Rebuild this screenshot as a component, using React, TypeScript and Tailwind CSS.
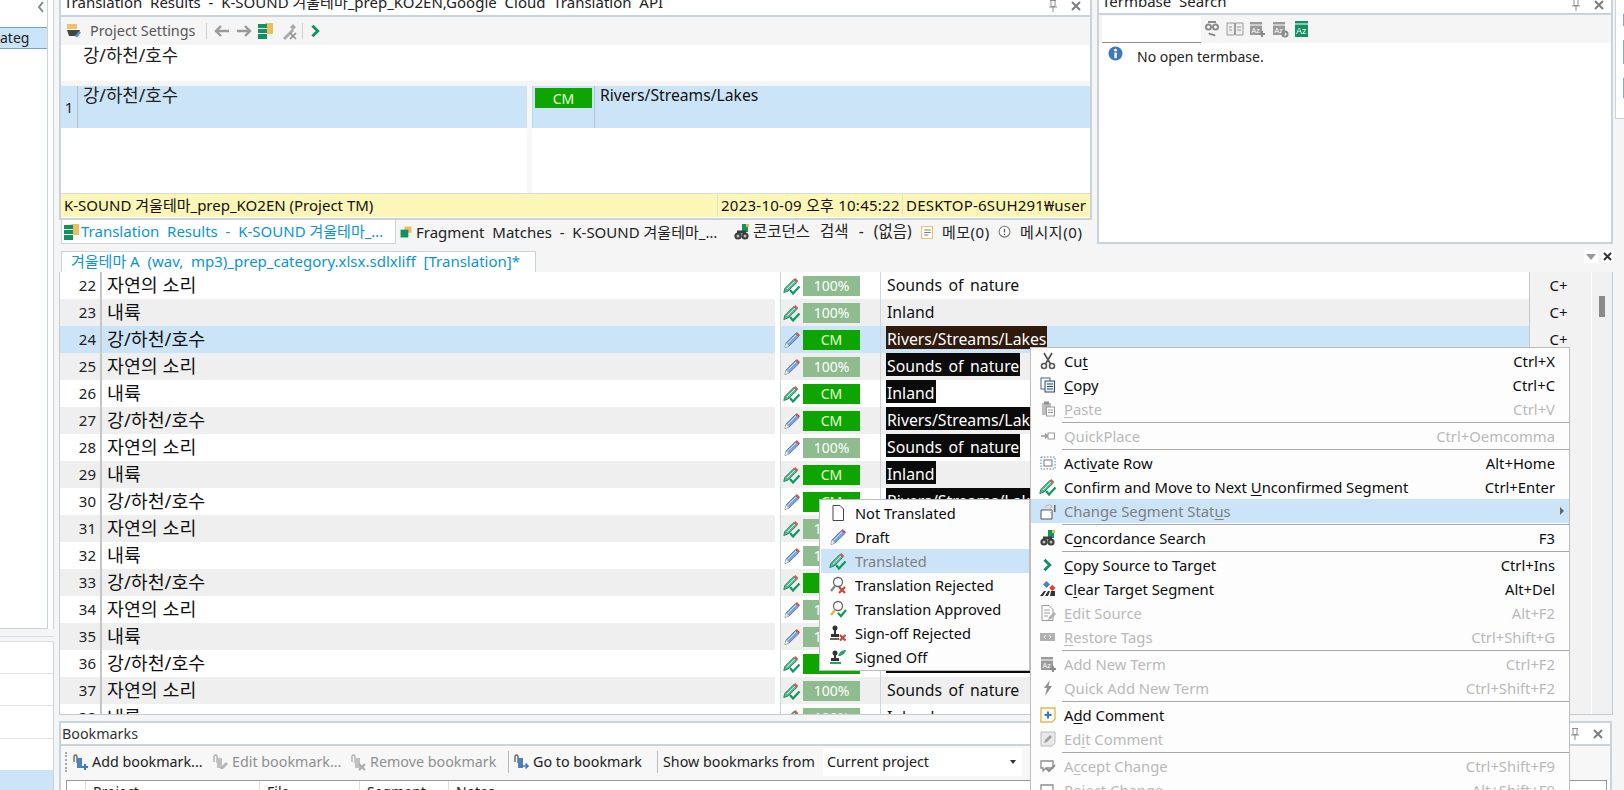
import { ReactNode } from "react";

const KO = `font-['Noto_Sans','Noto_Sans_CJK_KR',sans-serif]`;

function Ic({ s = 18, children, className = "" }: { s?: number; children: ReactNode; className?: string }) {
    return (
        <svg width={s} height={s} viewBox="0 0 18 18" className={`shrink-0 ${className}`}>
            {children}
        </svg>
    );
}

// Status pencils
const DraftIcon = () => (
    <Ic>
        <path d="M2 16.5l1-4.5L12.5 2.5l3.2 3.2L6 15z" fill="#7ea3da" stroke="#3f6fb5" strokeWidth="0.8" />
        <path d="M4.5 12.5L13 4" stroke="#dbe7f7" strokeWidth="0.9" />
        <path d="M12.5 2.5l1.4-1.4 3.2 3.2-1.4 1.4z" fill="#d9534f" />
        <path d="M2 16.5l1-4.5 3 3z" fill="#f1e8d2" />
    </Ic>
);
const TranslatedIcon = () => (
    <Ic>
        <path d="M0.8 15.5l1-4L10.8 2.5l3 3L5 14z" fill="#5cb894" stroke="#1f8a5e" strokeWidth="1" />
        <path d="M4 12L12 4" stroke="#d8f0e4" strokeWidth="0.9" />
        <path d="M10.8 2.5l1.5-1.5 3 3-1.5 1.5z" fill="#d9534f" />
        <path d="M7 13l3 3.5 6.5-7" fill="none" stroke="#11975f" strokeWidth="2.2" />
    </Ic>
);

const GreenChevron = () => (
    <Ic s={16}>
        <path d="M5 3l6 6-6 6" fill="none" stroke="#12925f" strokeWidth="3.2" />
    </Ic>
);
const Binoculars = () => (
    <Ic>
        <rect x="9" y="1" width="6" height="8" fill="#12925f" />
        <rect x="13" y="1" width="3" height="3" fill="#e8b74e" />
        <circle cx="5" cy="13" r="3.6" fill="#3d3d3d" />
        <circle cx="12" cy="13" r="3.6" fill="#3d3d3d" />
        <circle cx="5" cy="13" r="1.5" fill="#bbb" />
        <circle cx="12" cy="13" r="1.5" fill="#bbb" />
        <rect x="4" y="7.5" width="9" height="3" fill="#3d3d3d" />
    </Ic>
);
const SegGrid = ({ c = "#12925f" }: { c?: string }) => (
    <Ic>
        <rect x="8" y="1" width="8" height="11" fill="#eebd5e" />
        <rect x="1" y="2" width="9" height="15" fill={c} />
        <path d="M1 6.5h9M1 11.5h9" stroke="#fff" strokeWidth="1.2" />
    </Ic>
);
const TermBox = ({ mark = "plus" }: { mark?: string }) => (
    <Ic>
        <rect x="2" y="2" width="12" height="13" fill="#9a9a9a" />
        <path d="M2 5h12" stroke="#fff" />
        <text x="3.5" y="13" fontSize="7" fill="#fff" fontFamily="Liberation Sans">Az</text>
        {mark === "plus" ? (
            <path d="M11 14h6M14 11v6" stroke="#8a8a8a" strokeWidth="2" />
        ) : (
            <circle cx="14" cy="14" r="2.6" fill="none" stroke="#8a8a8a" strokeWidth="2" />
        )}
    </Ic>
);
const BookmarkIcon = ({ off, tail }: { off?: boolean; tail: ReactNode }) => (
    <Ic>
        <path d="M3 9V3.5C3 1.5 6 1.5 6 3.5V10" fill="none" stroke={off ? "#b0b0b0" : "#666"} strokeWidth="1.4" />
        <path d="M6 5h5v10H6z" fill={off ? "#c0c0c0" : "#4f7fbd"} />
        {tail}
    </Ic>
);

// Context menu icons
const icons: Record<string, ReactNode> = {
    cut: (
        <Ic>
            <path d="M5 1l6.5 11M13 1L6.5 12" stroke="#555" strokeWidth="1.7" />
            <circle cx="5" cy="14" r="2.5" fill="#fff" stroke="#555" strokeWidth="1.6" />
            <circle cx="13" cy="14" r="2.5" fill="#fff" stroke="#555" strokeWidth="1.6" />
        </Ic>
    ),
    copy: (
        <Ic>
            <rect x="2" y="2" width="9" height="11" fill="#fff" stroke="#44607f" />
            <rect x="6" y="5" width="9.5" height="11" fill="#e8eff7" stroke="#2f4c6b" />
            <path d="M8 8h6M8 10.5h6M8 13h6" stroke="#2f4c6b" />
        </Ic>
    ),
    paste: (
        <Ic>
            <rect x="3" y="3" width="9" height="12" fill="#bdbdbd" />
            <rect x="5" y="1.5" width="5" height="3" fill="#8f8f8f" />
            <rect x="7.5" y="7" width="8" height="9" fill="#fff" stroke="#9a9a9a" />
            <path d="M9 10h5M9 12.5h5" stroke="#9a9a9a" />
        </Ic>
    ),
    quick: (
        <Ic>
            <path d="M2 9h6M6 6.5L8.5 9 6 11.5" fill="none" stroke="#999" strokeWidth="1.6" />
            <rect x="9" y="6" width="6.5" height="6" fill="#fff" stroke="#999" />
        </Ic>
    ),
    activate: (
        <Ic>
            <rect x="2" y="3" width="14" height="12" fill="none" stroke="#4c7db8" strokeDasharray="1.5 1.5" />
            <rect x="5" y="6" width="8" height="6" fill="#fff" stroke="#777" />
        </Ic>
    ),
    confirm: <TranslatedIcon />,
    status: (
        <Ic>
            <path d="M2 8h11v9H2z" fill="#fff" stroke="#555" />
            <path d="M6 6c1-3 5-4 7-2l-2 3c2 1 2 3 0 4" fill="none" stroke="#e2a79b" />
            <rect x="15" y="3" width="1.5" height="7" fill="#666" />
        </Ic>
    ),
    binoc: <Binoculars />,
    chevron: <GreenChevron />,
    clear: (
        <Ic>
            <path d="M1 16l4-5h2l-3 5zM6 16l3-5h2l-2 5zM11 16l1-5h4v5z" fill="#333" />
            <rect x="5" y="2" width="5" height="5" transform="rotate(45 7.5 4.5)" fill="#4a7fc0" />
            <rect x="11" y="5.5" width="4.5" height="4.5" transform="rotate(45 13 8)" fill="#d9453d" />
        </Ic>
    ),
    editsrc: (
        <Ic>
            <path d="M3 1.5h7l4 4v11H3z" fill="#fff" stroke="#9a9a9a" />
            <path d="M5 6h6M5 9h6M5 12h4" stroke="#9a9a9a" />
            <path d="M9 16l1-3 5-5 2 2-5 5z" fill="#b0b0b0" />
        </Ic>
    ),
    restore: (
        <Ic>
            <rect x="1" y="5" width="15" height="8" fill="#b0b0b0" />
            <path d="M7 7l-2 2 2 2M10 7l2 2-2 2" fill="none" stroke="#fff" />
        </Ic>
    ),
    addterm: <TermBox />,
    bolt: (
        <Ic>
            <path d="M11 1L5 9h3l-2 8 7-10H9.5z" fill="#8f8f8f" />
        </Ic>
    ),
    addcomment: (
        <Ic>
            <path d="M2 2h14v11l-3 3H2z" fill="#fff" stroke="#e8b74e" strokeWidth="1.4" />
            <path d="M9 5.5v7M5.5 9h7" stroke="#3f79bd" strokeWidth="2" />
        </Ic>
    ),
    editcomment: (
        <Ic>
            <path d="M2 2h14v11l-3 3H2z" fill="#e8e8e8" stroke="#bbb" />
            <path d="M5 13l1-3 5-5 2 2-5 5z" fill="#a0a0a0" />
        </Ic>
    ),
    accept: (
        <Ic>
            <path d="M2 4h12v7H7l-3 3v-3H2z" fill="#fff" stroke="#8f8f8f" strokeWidth="1.3" />
            <path d="M7 11l3 3 6-6" fill="none" stroke="#8f8f8f" strokeWidth="2" />
        </Ic>
    ),
    reject: (
        <Ic>
            <path d="M2 4h12v7H7l-3 3v-3H2z" fill="#fff" stroke="#8f8f8f" strokeWidth="1.3" />
        </Ic>
    ),
};

type MenuItem = { label: string; keys?: string; icon: string; off?: boolean; hot?: boolean; arrow?: boolean };

const menuGroups: MenuItem[][] = [
    [
        { label: "Cu&t", keys: "Ctrl+X", icon: "cut" },
        { label: "&Copy", keys: "Ctrl+C", icon: "copy" },
        { label: "&Paste", keys: "Ctrl+V", icon: "paste", off: true },
    ],
    [{ label: "QuickPlace", keys: "Ctrl+Oemcomma", icon: "quick", off: true }],
    [
        { label: "Acti&vate Row", keys: "Alt+Home", icon: "activate" },
        { label: "Confirm and Move to Next &Unconfirmed Segment", keys: "Ctrl+Enter", icon: "confirm" },
        { label: "Change Segment Stat&us", icon: "status", hot: true, arrow: true },
    ],
    [{ label: "C&oncordance Search", keys: "F3", icon: "binoc" }],
    [
        { label: "&Copy Source to Target", keys: "Ctrl+Ins", icon: "chevron" },
        { label: "C&lear Target Segment", keys: "Alt+Del", icon: "clear" },
        { label: "&Edit Source", keys: "Alt+F2", icon: "editsrc", off: true },
        { label: "&Restore Tags", keys: "Ctrl+Shift+G", icon: "restore", off: true },
    ],
    [
        { label: "Add New Term", keys: "Ctrl+F2", icon: "addterm", off: true },
        { label: "Quick Add New Term", keys: "Ctrl+Shift+F2", icon: "bolt", off: true },
    ],
    [
        { label: "A&dd Comment", icon: "addcomment" },
        { label: "Ed&it Comment", icon: "editcomment", off: true },
    ],
    [
        { label: "A&ccept Change", keys: "Ctrl+Shift+F9", icon: "accept", off: true },
        { label: "Re&ject Change", keys: "Alt+Shift+F9", icon: "reject", off: true },
    ],
];

// "&" marks the mnemonic letter
function Mnemonic({ text }: { text: string }) {
    const i = text.indexOf("&");
    if (i < 0) return <>{text}</>;
    return (
        <>
            {text.slice(0, i)}
            <span className="underline underline-offset-2">{text[i + 1]}</span>
            {text.slice(i + 2)}
        </>
    );
}

function ContextMenu() {
    return (
        <div className="absolute left-[1030px] top-[347px] z-10 w-[540px] border border-[#bdbdbd] bg-[#fdfdfd] pt-[1px] text-[14.8px] font-['Noto_Sans',sans-serif]">
            {menuGroups.map((group, gi) => (
                <div key={gi}>
                    {gi > 0 && (
                        <div className="flex h-[3px] items-center pl-[31px]">
                            <div className="h-px w-full bg-[#a8a8a8]" />
                        </div>
                    )}
                    {group.map((item) => (
                        <div
                            key={item.label}
                            className={`flex h-[24px] items-center ${item.hot ? "bg-[#cce4f7] text-[#7f7f7f]" : item.off ? "text-[#b9b9b9]" : "text-[#0c0c0c]"}`}
                        >
                            <div className="flex w-[33px] justify-center">{icons[item.icon]}</div>
                            <span className="flex-1">
                                <Mnemonic text={item.label} />
                            </span>
                            {item.keys && <span className="pr-[14px]">{item.keys}</span>}
                            {item.arrow && <span className="mr-[5px] h-0 w-0 border-y-[4px] border-l-[4px] border-y-transparent border-l-[#666]" />}
                        </div>
                    ))}
                </div>
            ))}
        </div>
    );
}

const subItems: { label: string; icon: ReactNode; hot?: boolean }[] = [
    {
        label: "Not Translated",
        icon: (
            <Ic>
                <path d="M4 1.5h7l3.5 3.5v11.5H4z" fill="#fff" stroke="#444" />
            </Ic>
        ),
    },
    { label: "Draft", icon: <DraftIcon /> },
    { label: "Translated", icon: <TranslatedIcon />, hot: true },
    {
        label: "Translation Rejected",
        icon: (
            <Ic>
                <circle cx="9" cy="6" r="4.5" fill="#fff" stroke="#666" strokeWidth="1.3" />
                <path d="M6 10l-4 5" stroke="#888" strokeWidth="2.4" />
                <path d="M10 11l6 6M16 11l-6 6" stroke="#c8443c" strokeWidth="2.2" />
            </Ic>
        ),
    },
    {
        label: "Translation Approved",
        icon: (
            <Ic>
                <circle cx="9" cy="6" r="4.5" fill="#fff" stroke="#666" strokeWidth="1.3" />
                <path d="M6 10l-4 5" stroke="#e3b341" strokeWidth="2.4" />
                <path d="M9 13l3 3 5-6" fill="none" stroke="#11975f" strokeWidth="2.2" />
            </Ic>
        ),
    },
    {
        label: "Sign-off Rejected",
        icon: (
            <Ic>
                <circle cx="6" cy="4" r="2.5" fill="#333" />
                <path d="M5 6h2v4h3v3H2v-3h3z" fill="#333" />
                <path d="M1 15h9" stroke="#333" strokeWidth="1.5" />
                <path d="M11 11l5.5 5.5M16.5 11L11 16.5" stroke="#c8443c" strokeWidth="2.2" />
            </Ic>
        ),
    },
    {
        label: "Signed Off",
        icon: (
            <Ic>
                <circle cx="6" cy="5" r="2.5" fill="#333" />
                <path d="M5 7h2v3h3v3H2v-3h3z" fill="#333" />
                <path d="M1 15h11" stroke="#11975f" strokeWidth="1.8" />
                <path d="M9 8c1-4 4-6 8-6-1 4-4 6-8 6z" fill="#2fa070" />
            </Ic>
        ),
    },
];

function SubMenu() {
    return (
        <div className="absolute left-[819px] top-[499px] z-20 w-[211px] border border-[#bdbdbd] bg-[#fdfdfd] py-[1px] pl-[1px] text-[14.6px] font-['Noto_Sans',sans-serif]">
            {subItems.map((item) => (
                <div
                    key={item.label}
                    className={`flex h-[24px] items-center ${item.hot ? "bg-[#cce4f7] text-[#7f7f7f]" : "text-[#0c0c0c]"}`}
                >
                    <div className="flex w-[34px] justify-center">{item.icon}</div>
                    <span className="pt-[2px]">{item.label}</span>
                </div>
            ))}
        </div>
    );
}

const SRC = ["자연의 소리", "내륙", "강/하천/호수"];
const TGT = ["Sounds of nature", "Inland", "Rivers/Streams/Lakes"];

type Seg = { n: number; t: boolean; cm: boolean };
const segs: Seg[] = [
    { n: 22, t: true, cm: false },
    { n: 23, t: true, cm: false },
    { n: 24, t: false, cm: true },
    { n: 25, t: false, cm: false },
    { n: 26, t: true, cm: true },
    { n: 27, t: false, cm: true },
    { n: 28, t: false, cm: false },
    { n: 29, t: true, cm: true },
    { n: 30, t: false, cm: true },
    { n: 31, t: true, cm: false },
    { n: 32, t: false, cm: false },
    { n: 33, t: true, cm: true },
    { n: 34, t: false, cm: false },
    { n: 35, t: false, cm: false },
    { n: 36, t: true, cm: true },
    { n: 37, t: true, cm: false },
    { n: 38, t: true, cm: false },
];

function SegmentRow({ seg, index }: { seg: Seg; index: number }) {
    const selected = seg.n === 24;
    const bg = selected ? "bg-[#cce4f7]" : index % 2 === 1 ? "bg-[#efefef]" : "bg-white";
    const marked = seg.n >= 24 && seg.n <= 36;
    return (
        <div className="flex h-[27px] shrink-0">
            <div className={`flex w-[715px] ${bg}`}>
                <div className="flex w-[42px] items-center justify-end border-r-2 border-[#c6c6c6] pr-[4px] text-[15px] text-[#222]">{seg.n}</div>
                <div className={`pl-[5px] text-[18.4px] leading-[26px] text-[#111] ${KO}`}>{SRC[index % 3]}</div>
            </div>
            <div className="w-[5px] bg-white" />
            <div className="w-px bg-[#cfd5da]" />
            <div className={`flex w-[99px] items-center pl-[1px] ${bg}`}>
                <div className="flex w-[20px] justify-center">{seg.t ? <TranslatedIcon /> : <DraftIcon />}</div>
                <div className={`ml-[1px] flex h-[20px] w-[57px] items-center justify-center text-[14px] ${seg.cm ? "bg-[#0ea500] text-[#eaffd8]" : "bg-[#8fbc8f] text-white"}`}>
                    {seg.cm ? "CM" : "100%"}
                </div>
            </div>
            <div className="w-px bg-[#cfd5da]" />
            <div className={`w-[648px] pl-[5px] ${bg}`}>
                <span className={`inline-block h-[23px] px-[1px] text-[15.8px] leading-[26px] [word-spacing:2.4px] ${selected ? "bg-[#2f1a0b] text-white" : marked ? "bg-[#0a0a0a] text-white" : "text-[#111]"}`}>
                    {TGT[index % 3]}
                </span>
            </div>
            <div className="w-px bg-[#c6c6c6]" />
            <div className="flex flex-1 items-center justify-center bg-[#f2f2f2] pr-[4px] text-[15px] text-[#111]">C+</div>
        </div>
    );
}

function PinClose() {
    return (
        <div className="flex items-center gap-[13px] text-[#8d8d8d]">
            <svg width="10" height="12" viewBox="0 0 10 12">
                <path d="M2 0.5h6M3 0.5v6h4v-6M1 7h8M5 7v5" fill="none" stroke="#8d8d8d" />
            </svg>
            <svg width="10" height="10" viewBox="0 0 10 10">
                <path d="M1 1l8 8M9 1l-8 8" stroke="#7d7d7d" strokeWidth="2" />
            </svg>
        </div>
    );
}

function TopPanel() {
    return (
        <div className="w-[1033px]">
            <div className="flex h-[220px] flex-col border-x-2 border-b-2 border-[#c9d3db] bg-white">
                <div className="flex h-[17px] items-end justify-between overflow-hidden border-b-2 border-[#c9d3db] pl-[3px] pr-[9px]">
                    <span className={`whitespace-pre text-[15px] leading-[26px] text-[#222] ${KO}`}>
                        {"Translation  Results  -  K-SOUND 겨울테마_prep_KO2EN,Google  Cloud  Translation  API"}
                    </span>
                    <div className="-translate-y-[3px]">
                        <PinClose />
                    </div>
                </div>
                <div className="flex h-[28px] items-center bg-[#f5f5f5] pl-[3px] text-[14.4px] text-[#555]">
                    <Ic>
                        <path d="M3 8h13l-2 6H5z" fill="#444" />
                        <path d="M3 2h10v5H3z" fill="#f0c26a" />
                        <path d="M11 14l4-5 2 1.5-4 5z" fill="#5f8fce" />
                    </Ic>
                    <span className="ml-[8px]">Project Settings</span>
                    <div className="ml-[10px] h-[16px] w-px bg-[#cfcfcf]" />
                    <svg width="16" height="12" viewBox="0 0 16 12" className="ml-[7px]">
                        <path d="M7 1L2 6l5 5M2 6h13" fill="none" stroke="#9a9a9a" strokeWidth="2.4" />
                    </svg>
                    <svg width="16" height="12" viewBox="0 0 16 12" className="ml-[6px]">
                        <path d="M9 1l5 5-5 5M14 6H1" fill="none" stroke="#9a9a9a" strokeWidth="2.4" />
                    </svg>
                    <div className="ml-[5px]">
                        <SegGrid />
                    </div>
                    <div className="ml-[5px]">
                        <Ic>
                            <path d="M3 16l9-9 2 2-9 9zM13 2l-3 3 3 3 3-3" fill="#aaa" />
                            <path d="M10 11l6 6M16 11l-6 6" stroke="#8d8d8d" strokeWidth="1.6" />
                        </Ic>
                    </div>
                    <div className="ml-[4px] h-[16px] w-px bg-[#cfcfcf]" />
                    <div className="ml-[5px]">
                        <GreenChevron />
                    </div>
                </div>
                <div className={`h-[36px] pl-[22px] text-[17.8px] leading-[20px] text-[#222] ${KO}`}>강/하천/호수</div>
                <div className="h-[5px] bg-[#f5f5f5]" />
                <div className="flex h-[42px]">
                    <div className="flex w-[466px] bg-[#cce4f7]">
                        <div className="flex w-[17px] items-center justify-center border-r border-[#b5bfc7] text-[15px] text-[#222]">1</div>
                        <div className={`pl-[5px] text-[17.8px] leading-[19px] text-[#222] ${KO}`}>강/하천/호수</div>
                    </div>
                    <div className="w-[5px] bg-[#f7f7f7]" />
                    <div className="flex flex-1 border-l border-[#c5d3df] bg-[#cce4f7]">
                        <div className="ml-[2px] mt-[2px] flex h-[20px] w-[57px] items-center justify-center bg-[#0ea500] text-[14px] text-[#eaffd8]">CM</div>
                        <div className="ml-[2px] border-l border-[#b5c7d6] pl-[5px] text-[15.7px] leading-[19px] text-[#111]">Rivers/Streams/Lakes</div>
                    </div>
                </div>
                <div className="flex h-[65px]">
                    <div className="w-[466px]" />
                    <div className="w-[5px] bg-[#f7f7f7]" />
                </div>
                <div className={`flex h-[24px] items-center border-t border-[#d5dde3] bg-[#fcf6b7] text-[15px] text-[#111] ${KO}`}>
                    <span className="w-[656px] pl-[3px]">K-SOUND 겨울테마_prep_KO2EN (Project TM)</span>
                    <span className="w-[185px] whitespace-nowrap border-l border-[#dfe3d8] pl-[3px] leading-[23px] tracking-[0.25px]">2023-10-09 오후 10:45:22</span>
                    <span className="flex-1 whitespace-nowrap border-l border-[#dfe3d8] pl-[3px] leading-[23px] tracking-[0.2px]">DESKTOP-6SUH291₩user</span>
                </div>
            </div>
            <div className={`flex h-[24px] items-center whitespace-pre text-[15px] text-[#222] ${KO}`}>
                <div className="ml-[2px] flex h-full w-[335px] shrink-0 items-center overflow-hidden border-x border-b border-[#c9d3db] bg-white text-[#0a95d6]">
                    <div className="ml-[1px] shrink-0">
                        <SegGrid />
                    </div>
                    <span>{"Translation  Results  -  K-SOUND 겨울테마_…"}</span>
                </div>
                <div className="ml-[3px] flex w-[334px] shrink-0 items-center overflow-hidden">
                    <Ic s={14}>
                        <rect x="7" y="2" width="9" height="8" fill="#eebd5e" />
                        <rect x="2" y="6" width="10" height="10" fill="#12925f" />
                    </Ic>
                    <span className="ml-[3px]">{"Fragment  Matches  -  K-SOUND 겨울테마_…"}</span>
                </div>
                <Binoculars />
                <span className="ml-[2px] w-[157px] shrink-0 text-[15.5px] [word-spacing:1px]">{"콘코던스  검색  -  (없음)"}</span>
                <div className="ml-[10px] shrink-0">
                    <Ic s={15}>
                        <rect x="2" y="2" width="13" height="14" fill="#fff" stroke="#e3b341" />
                        <path d="M5 6h8M5 9h8M5 12h5" stroke="#666" />
                    </Ic>
                </div>
                <span className="ml-[7px] w-[48px] shrink-0 tracking-[0.5px]">메모(0)</span>
                <div className="ml-[7px] shrink-0">
                    <Ic s={15}>
                        <circle cx="9" cy="8" r="6.5" fill="#fff" stroke="#777" strokeWidth="1.3" />
                        <path d="M9 4.5v4.5M9 10.5v1.6" stroke="#555" strokeWidth="1.5" />
                    </Ic>
                </div>
                <span className="ml-[8px] shrink-0 tracking-[0.6px]">메시지(0)</span>
            </div>
        </div>
    );
}

function TermbasePanel() {
    return (
        <div className="ml-[5px] flex h-[244px] w-[516px] flex-col border-x-2 border-b-2 border-[#c9d3db] bg-white">
            <div className="flex h-[13px] items-end justify-between overflow-hidden pl-[3px] pr-[7px]">
                <span className={`whitespace-pre text-[15px] leading-[24px] text-[#222] ${KO}`}>{"Termbase  Search"}</span>
                <div className="-translate-y-[2px]">
                    <PinClose />
                </div>
            </div>
            <div className="flex h-[30px] items-center border-t-2 border-[#c9d3db] bg-[#f5f5f5] pl-[3px]">
                <div className="h-[27px] w-[99px] border-b border-[#8c8c8c] bg-white" />
                <div className="ml-[2px] flex items-center gap-[4.5px]">
                    <Ic>
                        <circle cx="5.5" cy="7" r="3.5" fill="#8a8a8a" />
                        <circle cx="12.5" cy="7" r="3.5" fill="#8a8a8a" />
                        <circle cx="5.5" cy="7" r="1.5" fill="#fff" />
                        <circle cx="12.5" cy="7" r="1.5" fill="#fff" />
                        <path d="M5 2h8M6 13c2 3 4 0 6 3" fill="none" stroke="#8a8a8a" strokeWidth="2" />
                    </Ic>
                    <Ic>
                        <path d="M1 3h7.5v12H1zM9.5 3H17v12H9.5z" fill="#efefef" stroke="#9a9a9a" />
                        <path d="M11 7h4M11 10h4M3 7h3M3 10h3" stroke="#9a9a9a" />
                    </Ic>
                    <TermBox />
                    <TermBox mark="gear" />
                    <Ic>
                        <rect x="2" y="1" width="13" height="16" fill="#12925f" />
                        <path d="M2 4h13" stroke="#fff" />
                        <text x="3" y="13.5" fontSize="9" fill="#fff" fontFamily="Liberation Sans">Az</text>
                    </Ic>
                </div>
            </div>
            <div className="flex pl-[9px] pt-[2px]">
                <svg width="15" height="15" viewBox="0 0 16 16" className="mt-[1px]">
                    <circle cx="8" cy="8" r="7.5" fill="#3f78bb" />
                    <rect x="6.8" y="7" width="2.6" height="6" fill="#fff" />
                    <circle cx="8" cy="4.4" r="1.5" fill="#fff" />
                </svg>
                <span className="ml-[14px] text-[14px] leading-[24px] text-[#222]">No open termbase.</span>
            </div>
        </div>
    );
}

function FarRight() {
    return (
        <div className="ml-[2px] flex h-[119px] flex-1 flex-col gap-[14px] border-b border-l border-[#c9d3db] bg-white pl-[7px] pt-[14px]">
            <div className="h-[12px] border-l-2 border-t border-[#7fa9d6]" />
            <div className="h-[24px] border-l-2 border-t border-[#7fa9d6]" />
            <div className="h-[20px] border-l-2 border-t border-[#7fa9d6]" />
        </div>
    );
}

function DocumentPane() {
    return (
        <div className="flex h-[470px] flex-col">
            <div className="flex h-[21px] items-end justify-between pr-[11px]">
                <div className={`ml-[2px] flex h-[21px] w-[475px] items-center whitespace-pre border-x border-t border-[#c9d3db] bg-white pb-[2px] pl-[9px] text-[15px] text-[#0a95d6] ${KO}`}>
                    {"겨울테마 A  (wav,  mp3)_prep_category.xlsx.sdlxliff  [Translation]*"}
                </div>
                <div className="mb-[9px] flex gap-[3px]">
                    <div className="flex h-[13px] w-[14px] items-center justify-center bg-white">
                        <span className="h-0 w-0 border-x-[5px] border-t-[6px] border-x-transparent border-t-[#999]" />
                    </div>
                    <div className="flex h-[13px] w-[13px] items-center justify-center bg-white">
                        <svg width="9" height="9" viewBox="0 0 9 9">
                            <path d="M1 1l7 7M8 1L1 8" stroke="#333" strokeWidth="2" />
                        </svg>
                    </div>
                </div>
            </div>
            <div className="flex h-[443px] w-[1554px] overflow-hidden border-x border-b border-[#c2ccd4] bg-white">
                <div className="flex w-[1531px] flex-col">
                    {segs.map((seg, i) => (
                        <SegmentRow key={seg.n} seg={seg} index={i} />
                    ))}
                </div>
                <div className="ml-px flex-1 bg-[#f0f0f0] pl-[7px] pt-[24px]">
                    <div className="h-[21px] w-[6px] bg-[#8a8a8a]" />
                </div>
            </div>
        </div>
    );
}

function BookmarksPane() {
    const tail = {
        add: <path d="M11 14h6M14 11v6" stroke="#3f79bd" strokeWidth="2" />,
        edit: <path d="M9 16l1-2 5-5 2 2-5 5z" fill="#b5b5b5" />,
        remove: <path d="M10 11l6 6M16 11l-6 6" stroke="#aaa" strokeWidth="2" />,
        go: <path d="M9 13h7M13.5 10.5L16 13l-2.5 2.5" fill="none" stroke="#3f79bd" strokeWidth="1.6" />,
    };
    return (
        <div className="flex h-[69px] w-[1553px] flex-col overflow-hidden whitespace-nowrap border-x-2 border-t-2 border-[#c9d3db] bg-white font-['Noto_Sans',sans-serif] text-[14.3px] text-[#222]">
            <div className="flex h-[21px] shrink-0 items-center justify-between pl-[1px] pr-[7px]">
                <span className="text-[#333]">Bookmarks</span>
                <PinClose />
            </div>
            <div className="flex h-[36px] shrink-0 items-center border-t-2 border-[#c9d3db] bg-[#f7f7f7] pb-[2px] pl-[4px]">
                <div className="mr-[4px] h-[20px] border-l-2 border-dotted border-[#aaa]" />
                <div className="mr-[3px]">
                    <BookmarkIcon tail={tail.add} />
                </div>
                <span className="w-[119px]">Add bookmark...</span>
                <div className="mr-[3px]">
                    <BookmarkIcon off tail={tail.edit} />
                </div>
                <span className="w-[117px] text-[#8f8f8f]">Edit bookmark...</span>
                <div className="mr-[3px]">
                    <BookmarkIcon off tail={tail.remove} />
                </div>
                <span className="w-[130px] text-[#8f8f8f]">Remove bookmark</span>
                <div className="ml-[8px] h-[22px] w-px bg-[#bbb]" />
                <div className="ml-[3px]">
                    <BookmarkIcon tail={tail.go} />
                </div>
                <span className="ml-[3px] w-[114px]">Go to bookmark</span>
                <div className="ml-[10px] h-[22px] w-px bg-[#bbb]" />
                <span className="ml-[5px] w-[153px]">Show bookmarks from</span>
                <div className="ml-[7px] flex h-[28px] w-[199px] items-center justify-between bg-white pl-[4px] pr-[6px]">
                    <span>Current project</span>
                    <span className="h-0 w-0 border-x-[3px] border-t-[4px] border-x-transparent border-t-[#333]" />
                </div>
            </div>
            <div className="ml-[5px] flex h-[20px] w-[1541px] shrink-0 border-x border-t border-[#999] text-[14px] text-[#222]">
                <div className="w-[19px] border-r border-[#ddd]" />
                <div className="w-[174px] border-r border-[#ddd] pl-[7px]">Project</div>
                <div className="w-[100px] border-r border-[#ddd] pl-[7px]">File</div>
                <div className="w-[89px] border-r border-[#ddd] pl-[7px]">Segment</div>
                <div className="pl-[7px]">Notes</div>
            </div>
        </div>
    );
}

function Sidebar() {
    return (
        <div className="flex h-full w-[59px] shrink-0 flex-col bg-[#f5f5f5]">
            <div className="flex h-[629px] w-[54px] shrink-0 border-r border-[#c9d3db] bg-white">
                <div className="flex h-full w-[48px] flex-col border-b border-r border-[#c9d3db]">
                    <div className="flex h-[27px] items-start justify-end pr-[2px] pt-[1px] text-[#777]">
                        <svg width="8" height="12" viewBox="0 0 8 12">
                            <path d="M6 1L2 6l4 5" fill="none" stroke="#888" strokeWidth="2" />
                        </svg>
                    </div>
                    <div className="h-[22px] overflow-hidden border-y border-[#6aa5e0] bg-[#cce4f7] text-left text-[14px] leading-[20px] text-[#222]">ateg</div>
                </div>
            </div>
            <div className="mt-[7px] h-[6px] w-[54px] shrink-0 border-y border-[#d5dde3]" />
            <div className="flex w-[54px] flex-1 flex-col border-r border-[#c9d3db] bg-white">
                <div className="h-[32px] border-b border-[#e3e3e3]" />
                <div className="h-[32px] border-b border-[#e3e3e3]" />
                <div className="h-[32px]" />
                <div className="h-[32px] border-t border-[#e3e3e3]" />
                <div className="flex-1 bg-[#cce4f7]" />
            </div>
        </div>
    );
}

export default function App() {
    return (
        <div className="relative flex h-[790px] w-[1624px] overflow-hidden bg-[#f5f5f5] font-['Noto_Sans',sans-serif]">
            <Sidebar />
            <div className="flex flex-1 flex-col">
                <div className="flex h-[251px] shrink-0 items-start">
                    <TopPanel />
                    <TermbasePanel />
                    <FarRight />
                </div>
                <DocumentPane />
                <BookmarksPane />
            </div>
            <ContextMenu />
            <SubMenu />
        </div>
    );
}
